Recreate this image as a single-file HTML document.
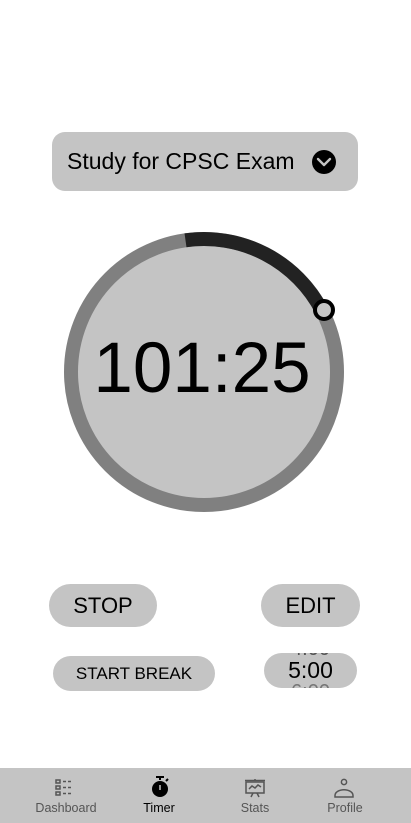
<!DOCTYPE html>
<html><head><meta charset="utf-8"><style>
body{margin:0;width:411px;height:823px;background:#fff;position:relative;overflow:hidden;font-family:"Liberation Sans",sans-serif}
.a{position:absolute}
.pill{position:absolute;background:#c4c4c4;display:flex;align-items:center;justify-content:center;color:#000}
.nav{position:absolute;left:0;top:768px;width:411px;height:55px;background:#c4c4c4}
.lbl{position:absolute;top:33px;font-size:12.5px;color:#555;width:100px;text-align:center}
</style></head><body>
<div class="pill" style="left:52px;top:132px;width:306px;height:59px;border-radius:13px;justify-content:flex-start">
<span style="margin-left:15px;font-size:23px">Study for CPSC Exam</span></div>
<svg class="a" style="left:0;top:0" width="411" height="823">
<circle cx="324" cy="162" r="12" fill="#000"/>
<path d="M318 159 L324 165 L330 159" stroke="#c4c4c4" stroke-width="2.4" fill="none" stroke-linecap="round" stroke-linejoin="round"/>
<circle cx="204" cy="372" r="133" fill="#c4c4c4" stroke="#808080" stroke-width="14"/>
<path d="M185.5 240.3 A133 133 0 0 1 322.1 311" stroke="#222" stroke-width="14" fill="none"/>
<circle cx="324" cy="310" r="9" fill="#c4c4c4" stroke="#000" stroke-width="4"/>
</svg>
<div class="a" style="left:2px;width:400px;top:326px;text-align:center;font-size:71px;line-height:86px">101:25</div>
<div class="pill" style="left:49px;top:584px;width:108px;height:43px;border-radius:22px;font-size:22px">STOP</div>
<div class="pill" style="left:261px;top:584px;width:99px;height:43px;border-radius:22px;font-size:22px">EDIT</div>
<div class="pill" style="left:53px;top:656px;width:162px;height:35px;border-radius:18px;font-size:17px">START BREAK</div>
<div class="pill" style="left:264px;top:653px;width:93px;height:35px;border-radius:18px;overflow:hidden;font-size:23px">
<div style="position:absolute;top:-14px;width:100%;text-align:center;color:#555;font-size:20px;line-height:20px">4:00</div>
<span>5:00</span>
<div style="position:absolute;top:29px;width:100%;text-align:center;color:#777;font-size:20px;line-height:20px">6:00</div></div>
<div class="nav">
<svg class="a" style="left:0;top:0" width="411" height="40">
<g stroke="#555" stroke-width="1.5" fill="none">
<rect x="56" y="12" width="4" height="3"/><rect x="56" y="18" width="4" height="3"/><rect x="56" y="24" width="4" height="3"/>
<path d="M63 13.5h3M68 13.5h3M63 19.5h3M68 19.5h3M63 25.5h3M68 25.5h3"/>
<rect x="246" y="14" width="18" height="11"/><path d="M245 12.5h20M249 21l3-3 3 2 3-3 3 2M253 25l-2 4M257 25l2 4M255 11v2"/>
<circle cx="344" cy="14" r="2.6"/><path d="M335 29v-1.5a7 4.5 0 0 1 18 0v1.5z"/>
</g>
<path d="M156 9h8M160 9v3" stroke="#000" stroke-width="2"/>
<circle cx="160" cy="21" r="8" fill="#000"/><path d="M160 17v5" stroke="#c4c4c4" stroke-width="1.5"/>
<path d="M166 13l2-2" stroke="#000" stroke-width="2"/>
</svg>
<div class="lbl" style="left:16px">Dashboard</div>
<div class="lbl" style="left:109px;color:#000">Timer</div>
<div class="lbl" style="left:205px">Stats</div>
<div class="lbl" style="left:295px">Profile</div>
</div>
</body></html>
